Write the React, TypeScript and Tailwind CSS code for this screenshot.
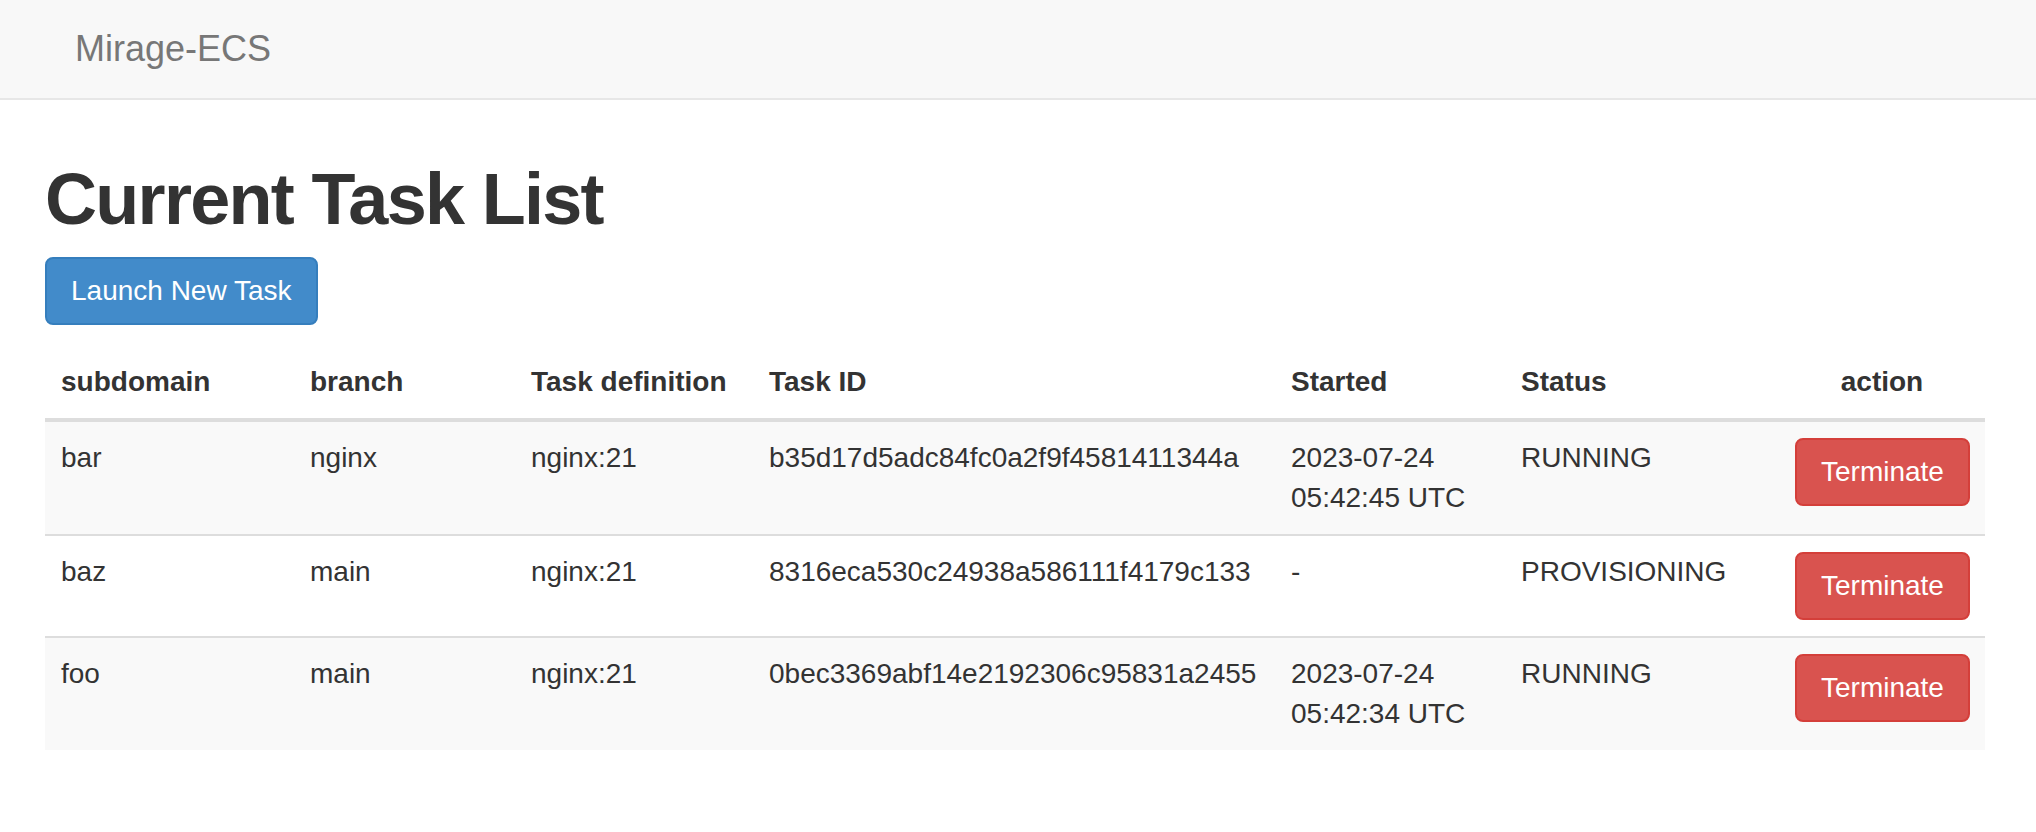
import React from "react";

type Task = {
  subdomain: string;
  branch: string;
  def: string;
  id: string;
  started: string[];
  status: string;
};

const tasks: Task[] = [
  {
    subdomain: "bar",
    branch: "nginx",
    def: "nginx:21",
    id: "b35d17d5adc84fc0a2f9f4581411344a",
    started: ["2023-07-24", "05:42:45 UTC"],
    status: "RUNNING",
  },
  {
    subdomain: "baz",
    branch: "main",
    def: "nginx:21",
    id: "8316eca530c24938a586111f4179c133",
    started: ["-"],
    status: "PROVISIONING",
  },
  {
    subdomain: "foo",
    branch: "main",
    def: "nginx:21",
    id: "0bec3369abf14e2192306c95831a2455",
    started: ["2023-07-24", "05:42:34 UTC"],
    status: "RUNNING",
  },
];

export default function App() {
  return (
    <div
      className="min-h-[832px] bg-white text-[#333] text-[28px] leading-[40px]"
      style={{ fontFamily: '"Liberation Sans", Arial, Helvetica, sans-serif' }}
    >
      <nav className="h-[100px] bg-[#f8f8f8] border-b-2 border-[#e7e7e7] flex items-center px-[75px]">
        <span className="text-[36px] leading-[40px] text-[#777]">Mirage-ECS</span>
      </nav>

      <div className="px-[45px]">
        <h1 className="mt-[60px] text-[72px] leading-[79px] font-bold tracking-[-1.7px] text-[#333]">
          Current Task List
        </h1>
        <button className="mt-[18px] h-[68px] px-[24px] rounded-[8px] bg-[#428bca] border-2 border-[#357ebd] text-white text-[28px] leading-[40px]">
          Launch New Task
        </button>

        <table className="mt-[21px] w-[1940px] table-fixed border-collapse">
          <colgroup>
            <col className="w-[249px]" />
            <col className="w-[221px]" />
            <col className="w-[238px]" />
            <col className="w-[522px]" />
            <col className="w-[230px]" />
            <col className="w-[274px]" />
            <col className="w-[206px]" />
          </colgroup>
          <thead>
            <tr>
              {["subdomain", "branch", "Task definition", "Task ID", "Started", "Status"].map((h) => (
                <th
                  key={h}
                  className="p-[16px] text-left align-bottom font-bold border-b-4 border-[#ddd] whitespace-nowrap"
                >
                  {h}
                </th>
              ))}
              <th className="p-[16px] text-center align-bottom font-bold border-b-4 border-[#ddd]">
                action
              </th>
            </tr>
          </thead>
          <tbody>
            {tasks.map((t, i) => (
              <tr key={t.id} className={i % 2 === 0 ? "bg-[#f9f9f9]" : "bg-white"}>
                <td className="p-[16px] align-top border-t-2 border-[#ddd]">{t.subdomain}</td>
                <td className="p-[16px] align-top border-t-2 border-[#ddd]">{t.branch}</td>
                <td className="p-[16px] align-top border-t-2 border-[#ddd]">{t.def}</td>
                <td className="p-[16px] align-top border-t-2 border-[#ddd] whitespace-nowrap">{t.id}</td>
                <td className="p-[16px] align-top border-t-2 border-[#ddd]">
                  {t.started.map((s) => (
                    <div key={s}>{s}</div>
                  ))}
                </td>
                <td className="p-[16px] align-top border-t-2 border-[#ddd]">{t.status}</td>
                <td className="p-[16px] align-top text-center border-t-2 border-[#ddd]">
                  <button className="h-[68px] px-[24px] rounded-[8px] bg-[#d9534f] border-2 border-[#d43f3a] text-white text-[28px] leading-[40px]">
                    Terminate
                  </button>
                </td>
              </tr>
            ))}
          </tbody>
        </table>
      </div>
    </div>
  );
}
